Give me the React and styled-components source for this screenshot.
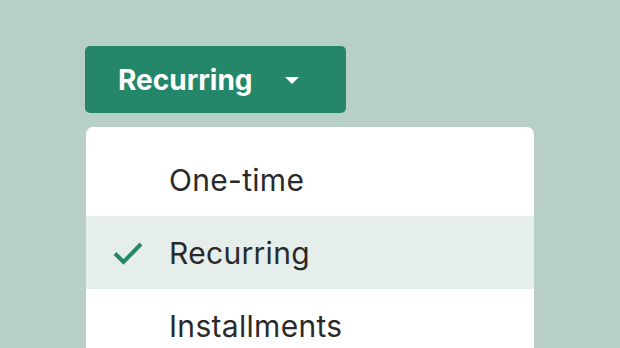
import React from "react";
import styled, { createGlobalStyle } from "styled-components";

const Global = createGlobalStyle`
  html, body {
    margin: 0;
    background: #b8cfc7;
    font-family: Inter, "Noto Sans", sans-serif;
  }
`;

const Page = styled.div`
  height: 348px;
  overflow: hidden;
  padding: 46px 0 0 85px;
  box-sizing: border-box;
  display: flex;
  flex-direction: column;
  align-items: flex-start;
  gap: 14px;
`;

const Trigger = styled.button`
  flex-shrink: 0;
  width: 261px;
  height: 67px;
  border: none;
  border-radius: 5px;
  background: #258769;
  color: #fff;
  font-family: Inter, "Noto Sans", sans-serif;
  font-weight: 700;
  font-size: 28px;
  display: flex;
  align-items: center;
  padding: 0 0 0 33px;
  gap: 32px;
  cursor: pointer;
`;

const Caret = styled.span`
  width: 0;
  height: 0;
  border-left: 7px solid transparent;
  border-right: 7px solid transparent;
  border-top: 7px solid #fff;
  margin-top: 2px;
`;

const Menu = styled.ul`
  flex-shrink: 0;
  list-style: none;
  margin: 0 0 0 1px;
  padding: 16px 0 0;
  width: 448px;
  background: #fff;
  border-radius: 7px;
`;

const Item = styled.li`
  height: 73px;
  display: flex;
  align-items: center;
  background: ${(p) => (p.$selected ? "#e5eeeb" : "transparent")};
  color: #2a2a2a;
  font-size: 30px;
  font-weight: 400;
  letter-spacing: 0.3px;
`;

const CheckCell = styled.span`
  width: 83px;
  display: flex;
  justify-content: center;
  padding-left: 1px;
  box-sizing: border-box;
`;

const Check = () => (
  <svg width="30" height="24" viewBox="0 0 30 24" fill="none">
    <path d="M2 12.5 L10.5 21 L28 3" stroke="#258769" strokeWidth="4" />
  </svg>
);

const options = ["One-time", "Recurring", "Installments"];

export default function App() {
  const selected = "Recurring";
  return (
    <>
      <Global />
      <Page>
        <Trigger>
          Recurring
          <Caret />
        </Trigger>
        <Menu>
          {options.map((o) => (
            <Item key={o} $selected={o === selected}>
              <CheckCell>{o === selected && <Check />}</CheckCell>
              {o}
            </Item>
          ))}
        </Menu>
      </Page>
    </>
  );
}
